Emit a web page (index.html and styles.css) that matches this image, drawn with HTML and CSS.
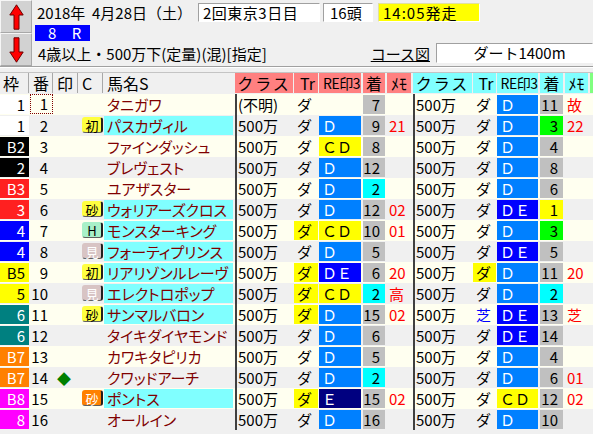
FILE: index.html
```html
<!DOCTYPE html>
<html lang="ja">
<head>
<meta charset="utf-8">
<link rel="stylesheet" href="styles.css">
</head>
<body>
<div class="top">
  <div class="nav">
    <div class="navbtn"><svg width="15" height="26" viewBox="0 0 15 26"><polygon points="7.5,0.8 14.2,11 10,11 10,25.2 5,25.2 5,11 0.8,11" fill="#ff0000" stroke="#6a0000" stroke-width="1"/></svg></div>
    <div class="navbtn"><svg width="15" height="26" viewBox="0 0 15 26"><polygon points="7.5,25.2 14.2,15 10,15 10,0.8 5,0.8 5,15 0.8,15" fill="#ff0000" stroke="#6a0000" stroke-width="1"/></svg></div>
  </div>
  <div class="info">
    <div class="line1">
      <span class="date">2018年&nbsp; 4月28日（土）</span>
      <span class="box kai">2回東京3日目</span>
      <span class="box heads">16頭</span>
      <span class="box start">14:05発走</span>
    </div>
    <div class="line2"><span class="race">8 R</span></div>
    <div class="line3">
      <span class="cond">4歳以上・500万下(定量)(混)[指定]</span>
      <span class="course">コース図</span>
      <span class="box dist">ダート1400m</span>
    </div>
  </div>
</div>
<div class="sep"></div>

<div class="grid hrow">
  <div class="hl">枠</div>
  <div class="hl">番</div>
  <div class="hl">印</div>
  <div class="hl">C</div>
  <div class="hn">馬名S</div>
  <div class="hs k">クラス</div>
  <div class="hs tr">Tr</div>
  <div class="hs re">RE印3</div>
  <div class="hs ch">着</div>
  <div class="hs me">ﾒﾓ</div>
  <div class="hc k">クラス</div>
  <div class="hc tr">Tr</div>
  <div class="hc re">RE印3</div>
  <div class="hc ch">着</div>
  <div class="hc me">ﾒﾓ</div>
  <div class="hg"></div>
</div>

<div class="grid row odd">
  <div class="w w1">1</div><div class="b focus">1</div><div class="m"></div><div class="t"></div>
  <div class="n">タニガワ</div>
  <div class="k">(不明)</div><div class="tr">ダ</div><div class="re"></div><div class="ch">7</div><div class="me"></div>
  <div class="k">500万</div><div class="tr">ダ</div><div class="re d">Ｄ</div><div class="ch">11</div><div class="me">故</div>
</div>
<div class="grid row even">
  <div class="w w1">1</div><div class="b">2</div><div class="m"></div><div class="t"><span class="tag t-yel">初</span></div>
  <div class="n cy">パスカヴィル</div>
  <div class="k">500万</div><div class="tr">ダ</div><div class="re d">Ｄ</div><div class="ch">9</div><div class="me">21</div>
  <div class="k">500万</div><div class="tr">ダ</div><div class="re d">Ｄ</div><div class="ch c-g">3</div><div class="me">22</div>
</div>
<div class="grid row odd">
  <div class="w w2">B2</div><div class="b">3</div><div class="m"></div><div class="t"></div>
  <div class="n">ファインダッシュ</div>
  <div class="k">500万</div><div class="tr">ダ</div><div class="re cd">ＣＤ</div><div class="ch">8</div><div class="me"></div>
  <div class="k">500万</div><div class="tr">ダ</div><div class="re d">Ｄ</div><div class="ch">4</div><div class="me"></div>
</div>
<div class="grid row even">
  <div class="w w2">2</div><div class="b">4</div><div class="m"></div><div class="t"></div>
  <div class="n">ブレヴェスト</div>
  <div class="k">500万</div><div class="tr">ダ</div><div class="re d">Ｄ</div><div class="ch">12</div><div class="me"></div>
  <div class="k">500万</div><div class="tr">ダ</div><div class="re d">Ｄ</div><div class="ch">8</div><div class="me"></div>
</div>
<div class="grid row odd">
  <div class="w w3">B3</div><div class="b">5</div><div class="m"></div><div class="t"></div>
  <div class="n">ユアザスター</div>
  <div class="k">500万</div><div class="tr">ダ</div><div class="re d">Ｄ</div><div class="ch c-c">2</div><div class="me"></div>
  <div class="k">500万</div><div class="tr">ダ</div><div class="re d">Ｄ</div><div class="ch">6</div><div class="me"></div>
</div>
<div class="grid row even">
  <div class="w w3">3</div><div class="b">6</div><div class="m"></div><div class="t"><span class="tag t-yel">砂</span></div>
  <div class="n cy">ウォリアーズクロス</div>
  <div class="k">500万</div><div class="tr">ダ</div><div class="re d">Ｄ</div><div class="ch">12</div><div class="me">02</div>
  <div class="k">500万</div><div class="tr">ダ</div><div class="re de">ＤＥ</div><div class="ch c-y">1</div><div class="me"></div>
</div>
<div class="grid row odd">
  <div class="w w4">4</div><div class="b">7</div><div class="m"></div><div class="t"><span class="tag t-h">H</span></div>
  <div class="n cy">モンスターキング</div>
  <div class="k">500万</div><div class="tr y">ダ</div><div class="re cd">ＣＤ</div><div class="ch">10</div><div class="me">01</div>
  <div class="k">500万</div><div class="tr">ダ</div><div class="re d">Ｄ</div><div class="ch c-g">3</div><div class="me"></div>
</div>
<div class="grid row even">
  <div class="w w4">4</div><div class="b">8</div><div class="m"></div><div class="t"><span class="tag t-mi">見</span></div>
  <div class="n cy">フォーティプリンス</div>
  <div class="k">500万</div><div class="tr">ダ</div><div class="re d">Ｄ</div><div class="ch">5</div><div class="me"></div>
  <div class="k">500万</div><div class="tr">ダ</div><div class="re de">ＤＥ</div><div class="ch">5</div><div class="me"></div>
</div>
<div class="grid row odd">
  <div class="w w5">B5</div><div class="b">9</div><div class="m"></div><div class="t"><span class="tag t-yel">初</span></div>
  <div class="n cy">リアリゾンルレーヴ</div>
  <div class="k">500万</div><div class="tr y">ダ</div><div class="re de">ＤＥ</div><div class="ch">6</div><div class="me">20</div>
  <div class="k">500万</div><div class="tr y">ダ</div><div class="re d">Ｄ</div><div class="ch">11</div><div class="me">20</div>
</div>
<div class="grid row even">
  <div class="w w5">5</div><div class="b">10</div><div class="m"></div><div class="t"><span class="tag t-mi">見</span></div>
  <div class="n cy">エレクトロポップ</div>
  <div class="k">500万</div><div class="tr y">ダ</div><div class="re cd">ＣＤ</div><div class="ch c-c">2</div><div class="me">高</div>
  <div class="k">500万</div><div class="tr">ダ</div><div class="re d">Ｄ</div><div class="ch c-c">2</div><div class="me"></div>
</div>
<div class="grid row odd">
  <div class="w w6">6</div><div class="b">11</div><div class="m"></div><div class="t"><span class="tag t-yel">砂</span></div>
  <div class="n cy">サンマルバロン</div>
  <div class="k">500万</div><div class="tr y">ダ</div><div class="re d">Ｄ</div><div class="ch">15</div><div class="me">02</div>
  <div class="k">500万</div><div class="tr shiba">芝</div><div class="re de">ＤＥ</div><div class="ch">13</div><div class="me">芝</div>
</div>
<div class="grid row even">
  <div class="w w6">6</div><div class="b">12</div><div class="m"></div><div class="t"></div>
  <div class="n">タイキダイヤモンド</div>
  <div class="k">500万</div><div class="tr">ダ</div><div class="re d">Ｄ</div><div class="ch">6</div><div class="me"></div>
  <div class="k">500万</div><div class="tr">ダ</div><div class="re de">ＤＥ</div><div class="ch">14</div><div class="me"></div>
</div>
<div class="grid row odd">
  <div class="w w7">B7</div><div class="b">13</div><div class="m"></div><div class="t"></div>
  <div class="n">カワキタピリカ</div>
  <div class="k">500万</div><div class="tr">ダ</div><div class="re d">Ｄ</div><div class="ch">5</div><div class="me"></div>
  <div class="k">500万</div><div class="tr">ダ</div><div class="re d">Ｄ</div><div class="ch">4</div><div class="me"></div>
</div>
<div class="grid row even">
  <div class="w w7">B7</div><div class="b">14</div><div class="m"><span class="dia">◆</span></div><div class="t"></div>
  <div class="n">クワッドアーチ</div>
  <div class="k">500万</div><div class="tr">ダ</div><div class="re d">Ｄ</div><div class="ch c-c">2</div><div class="me"></div>
  <div class="k">500万</div><div class="tr">ダ</div><div class="re d">Ｄ</div><div class="ch">6</div><div class="me">01</div>
</div>
<div class="grid row odd">
  <div class="w w8">B8</div><div class="b">15</div><div class="m"></div><div class="t"><span class="tag t-org">砂</span></div>
  <div class="n cy">ポントス</div>
  <div class="k">500万</div><div class="tr y">ダ</div><div class="re e">Ｅ</div><div class="ch">15</div><div class="me">02</div>
  <div class="k">500万</div><div class="tr">ダ</div><div class="re cd">ＣＤ</div><div class="ch">12</div><div class="me">02</div>
</div>
<div class="grid row even">
  <div class="w w8">8</div><div class="b">16</div><div class="m"></div><div class="t"></div>
  <div class="n">オールイン</div>
  <div class="k">500万</div><div class="tr">ダ</div><div class="re d">Ｄ</div><div class="ch">16</div><div class="me"></div>
  <div class="k">500万</div><div class="tr">ダ</div><div class="re d">Ｄ</div><div class="ch">10</div><div class="me"></div>
</div>
</body>
</html>
```

FILE: styles.css
```css
* { box-sizing: border-box; }
body {
  margin: 0;
  width: 593px;
  height: 434px;
  overflow: hidden;
  background: #f0f0f0;
  color: #000;
  font-family: "Noto Sans CJK JP", "Noto Sans", sans-serif;
  font-size: 15px;
}

/* ---------- top info area ---------- */
.top { display: flex; height: 66px; }
.nav { width: 32px; display: flex; flex-direction: column; }
.navbtn {
  height: 33px;
  background: #d2d2d2;
  border: 1px solid;
  border-color: #f6f6f6 #a8a8a8 #a8a8a8 #f6f6f6;
  display: flex;
  align-items: center;
  justify-content: center;
}
.info { flex: 1; margin-left: 3px; padding-top: 3px; display: flex; flex-direction: column; }
.line1 { display: flex; height: 19px; }
.date { width: 163px; padding-left: 2px; line-height: 19px; white-space: nowrap; }
.box {
  background: #fff;
  border: 1px solid;
  border-color: #a0a0a0 #ffffff #ffffff #a0a0a0;
  line-height: 17px;
  white-space: nowrap;
}
.kai { width: 122px; padding-left: 4px; letter-spacing: 0.5px; }
.heads { width: 50px; margin-left: 3px; padding-left: 6px; }
.start { width: 102px; margin-left: 5px; padding-left: 4px; background: #ffff00; border-color: #e0e0a0 #ffffff #ffffff #e0e0a0; letter-spacing: 1px; }
.line2 { margin-top: 3px; height: 16px; display: flex; }
.race {
  width: 55px;
  height: 16px;
  background: #0000ff;
  color: #fff;
  line-height: 16px;
  padding-left: 13px;
  letter-spacing: 6px;
}
.line3 { margin-top: 2px; height: 20px; display: flex; align-items: center; }
.cond { padding-left: 3px; white-space: nowrap; }
.course { margin-left: auto; margin-right: 6px; text-decoration: underline; white-space: nowrap; }
.dist { width: 157px; height: 20px; line-height: 18px; text-align: center; padding-left: 10px; }

.sep { height: 2px; border-top: 1px solid #a0a0a0; border-bottom: 1px solid #ffffff; margin-bottom: 4px; }

/* ---------- table ---------- */
.grid {
  display: grid;
  grid-template-columns: 30px 24px 25px 25px 131px 59px 25px 44px 24px 26px 60px 24px 43px 25px 25px 3px;
}
.hrow {
  height: 22px;
  border-top: 1px solid #c4c4c4;
  padding-bottom: 1px;
  font-size: 16px;
  line-height: 20px;
  white-space: nowrap;
}
.hl { border-right: 1px solid #a8a8a8; padding-left: 3px; margin-right: 1px; }
.hn { padding-left: 3px; }
.hs { background: #ff8080; text-align: center; }
.hc { background: #80ffff; text-align: center; }
.hs.k, .hc.k { letter-spacing: 2px; }
.hs.re, .hc.re { font-size: 14px; letter-spacing: -0.5px; }
.hg { background: #80ff80; }

.row {
  height: 21px;
  padding: 1px 0;
  line-height: 19px;
  white-space: nowrap;
}
.odd { background: #fffff0; }
.even { background: #f0f0f0; }
.row > div { overflow: hidden; }

.w { margin-right: 1px; text-align: right; padding-right: 4px; }
.b { margin-right: 1px; text-align: right; padding-right: 5px; }
.m { margin-right: 1px; padding-left: 3px; }
.t { margin-right: 1px; }
.n {
  margin-right: 2px;
  padding-left: 3px;
  color: #800000;
  font-feature-settings: "palt";
}
.k { margin-right: 1px; }
.row .k { border-left: 2px solid #404040; margin-top: -1px; margin-bottom: -1px; line-height: 21px; padding-left: 1px; }
.tr { margin-right: 1px; padding-left: 3px; }
.re { margin-right: 2px; padding-left: 3px; }
.ch { margin-right: 2px; }
.row .ch { background: #c0c0c0; text-align: right; padding-right: 5px; }
.me { margin-right: 2px; }
.row .me { color: #ff0000; padding-left: 2px; }

.focus { outline: 1px dotted #800000; outline-offset: -1px; margin-top: -1px; }

.w1 { background: #ffffff; color: #000; }
.w2 { background: #000000; color: #fff; }
.w3 { background: #ff2020; color: #fff; }
.w4 { background: #0000ff; color: #fff; }
.w5 { background: #ffff00; color: #000; }
.w6 { background: #008080; color: #fff; }
.w7 { background: #ff8000; color: #fff; }
.w8 { background: #ff00ff; color: #fff; }

.cy { background: #80ffff; }
.y { background: #ffff00; }
.shiba { color: #0000ff; }
.d { background: #0080ff; color: #fff; }
.de { background: #0000ff; color: #fff; }
.e { background: #000080; color: #fff; }
.cd { background: #ffff00; color: #000; }
.row .c-y { background: #ffff00; }
.row .c-c { background: #00ffff; }
.row .c-g { background: #00ff00; }

.tag {
  display: block;
  width: 21px;
  height: 16px;
  margin: 1px 0 0 3px;
  font-size: 13px;
  line-height: 15px;
  text-align: center;
  border: 1px solid transparent;
  border-right: 2px solid #202020;
  border-bottom-color: #606060;
  border-radius: 3px;
}
.t-yel { background: #ffff40; color: #000; }
.t-h { background: #a8f0c8; color: #000; }
.t-mi { background: #d8c4c4; color: #fff; }
.t-org { background: #ff8000; color: #fff; }
.dia { color: #008000; font-size: 14px; }
```
